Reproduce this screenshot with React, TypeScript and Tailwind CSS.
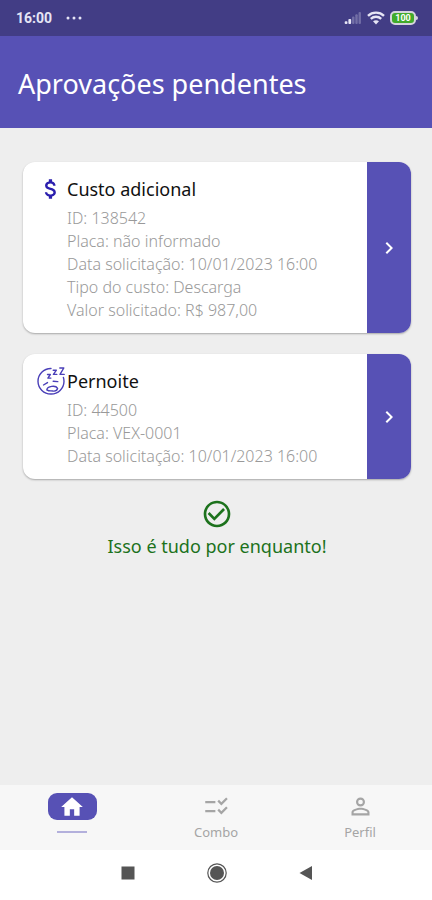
import type { ReactNode } from "react";
import {
  MdAttachMoney,
  MdCheckCircleOutline,
  MdChecklistRtl,
  MdChevronRight,
  MdHome,
  MdPersonOutline,
} from "react-icons/md";

type Approval = { title: string; icon: ReactNode; lines: string[] };

const approvals: Approval[] = [
  {
    title: "Custo adicional",
    icon: <MdAttachMoney className="size-[26px] text-[#2b1fae]" />,
    lines: [
      "ID: 138542",
      "Placa: não informado",
      "Data solicitação: 10/01/2023 16:00",
      "Tipo do custo: Descarga",
      "Valor solicitado: R$ 987,00",
    ],
  },
  {
    title: "Pernoite",
    icon: <SleepIcon />,
    lines: ["ID: 44500", "Placa: VEX-0001", "Data solicitação: 10/01/2023 16:00"],
  },
];

function SleepIcon() {
  return (
    <svg viewBox="0 0 28 28" className="size-7 shrink-0" fill="none" stroke="#4a3fb8" strokeWidth="1.4" strokeLinecap="round" strokeLinejoin="round" aria-hidden="true">
      <path d="M14 1.500A12.800 12.800 0 0 0 1 14.500A12.800 12.800 0 0 0 14 27A12.800 12.800 0 0 0 27 14.500A12.800 12.800 0 0 0 26.400 10.500" />
      <path d="M6.500 18l4-2.400M16.200 14.200l4.600.4" />
      <path d="M9.800 22.800c.6-3.600 8.800-5 10.800-1.400-.4 1.600-2 3-4.600 2.600-2.200-.4-3.800.4-6.200-1.200z" />
      <path d="M10.500 7.500h2.800l-2.400 3.600h3M16.200 3.200h3.200l-3 4.200h3.400M22.800 1h4l-3.800 6.400h4.200" />
    </svg>
  );
}

function StatusBar() {
  return (
    <div className="flex h-9 items-center justify-between bg-[#423d85] pr-[14px] pl-4 text-[#e6e5f5]">
      <div className="flex items-center gap-[14px]">
        <span className="font-[Roboto,sans-serif] text-sm font-bold">16:00</span>
        <svg viewBox="0 0 16 4" className="h-1 w-4" fill="currentColor" aria-hidden="true">
          <circle cx="2" cy="2" r="1.500" />
          <circle cx="8" cy="2" r="1.500" />
          <circle cx="14" cy="2" r="1.500" />
        </svg>
      </div>
      <div className="flex items-center gap-[5px]">
        <svg viewBox="0 0 18 13" className="h-3 w-[18px]" fill="currentColor" aria-hidden="true">
          <rect x="0" y="10" width="3" height="3" rx="1" />
          <rect x="4" y="7.500" width="3" height="5.500" rx="1" />
          <rect x="8" y="5" width="2.600" height="8" rx="1" opacity=".3" />
          <rect x="11.500" y="2.500" width="2.600" height="10.500" rx="1" opacity=".3" />
          <rect x="15" y="0" width="2.600" height="13" rx="1" opacity=".3" />
        </svg>
        <svg viewBox="0 0 18 14" className="h-[14px] w-[18px]" fill="none" stroke="currentColor" strokeWidth="2.400" aria-hidden="true">
          <path d="M1 4.800C5.500.6 12.500.6 17 4.800M3.800 7.800C6.800 5 11.200 5 14.200 7.800" />
          <path d="M6 10.300c1.800-1.500 4.200-1.500 6 0L9 13.500z" fill="currentColor" stroke="none" />
        </svg>
        <div className="flex items-center">
          <div className="flex h-[14px] w-[26px] items-center justify-center rounded-[5px] border-2 border-[#d5d4dd] bg-[#41ab2b] font-[Roboto,sans-serif] text-[9px] leading-none font-bold text-white">
            100
          </div>
          <div className="h-1 w-0.5 rounded-r-sm bg-[#d5d4dd]" />
        </div>
      </div>
    </div>
  );
}

function ApprovalCard({ title, icon, lines }: Approval) {
  return (
    <article className="flex overflow-hidden rounded-xl bg-white shadow-[0_1px_2px_rgba(0,0,0,0.3)]">
      <div className="flex-1 pt-3 pb-[11px] pl-[11px]">
        <div className="flex h-[30px] items-center">
          <div className="flex w-[33px] shrink-0 justify-center">{icon}</div>
          <h2 className="text-[18px] text-[#111]">{title}</h2>
        </div>
        <ul className="mt-[3px] pl-[33px] text-[16px] leading-[23px] font-light text-[#999]">
          {lines.map((line) => (
            <li key={line}>{line}</li>
          ))}
        </ul>
      </div>
      <button type="button" aria-label={title} className="flex w-11 shrink-0 items-center justify-center bg-[#5751b5] text-white">
        <MdChevronRight className="size-6" />
      </button>
    </article>
  );
}

function TabBar() {
  return (
    <nav className="grid h-[65px] grid-cols-3 bg-[#f7f7f7] text-[13px] text-[#a5a5a5]">
      <a href="#inicio" aria-label="Início" className="flex flex-col items-center pt-2">
        <span className="flex h-[27px] w-[49px] items-center justify-center rounded-[9px] bg-[#5751b5] text-white">
          <MdHome className="size-[26px]" />
        </span>
        <span className="mt-[11px] h-0.5 w-[30px] bg-[#b3b0dc]" />
      </a>
      <a href="#combo" className="flex flex-col items-center pt-2">
        <MdChecklistRtl className="size-[27px]" />
        <span className="leading-6">Combo</span>
      </a>
      <a href="#perfil" className="flex flex-col items-center pt-2">
        <MdPersonOutline className="size-[27px]" />
        <span className="leading-6">Perfil</span>
      </a>
    </nav>
  );
}

function SystemBar() {
  return (
    <div className="flex h-[50px] items-center justify-center gap-[69px] bg-white pb-1 pl-0.5 text-[#555]">
      <button type="button" aria-label="Recentes">
        <svg viewBox="0 0 20 20" className="size-5" fill="currentColor" aria-hidden="true">
          <rect x="3.500" y="3.500" width="13" height="13" />
        </svg>
      </button>
      <button type="button" aria-label="Tela inicial">
        <svg viewBox="0 0 20 20" className="size-5" fill="currentColor" aria-hidden="true">
          <circle cx="10" cy="10" r="9.200" fill="none" stroke="currentColor" strokeWidth="1.200" />
          <circle cx="10" cy="10" r="7" />
        </svg>
      </button>
      <button type="button" aria-label="Voltar">
        <svg viewBox="0 0 20 20" className="size-5" fill="currentColor" aria-hidden="true">
          <path d="M3.500 10L16 3v14z" />
        </svg>
      </button>
    </div>
  );
}

export default function App() {
  return (
    <div className="flex min-h-screen flex-col bg-[#eee] font-['Noto_Sans',sans-serif]">
      <StatusBar />
      <header className="flex h-[92px] items-center bg-[#5751b5] px-[18px] pt-1">
        <h1 className="text-[27px] text-white">Aprovações pendentes</h1>
      </header>
      <main className="flex flex-1 flex-col gap-[21px] pt-[34px] pr-[21px] pl-[23px]">
        {approvals.map((approval) => (
          <ApprovalCard key={approval.title} {...approval} />
        ))}
        <div className="-mt-0.5 flex flex-col items-center text-[#1c721c]">
          <MdCheckCircleOutline className="size-8" />
          <p className="mt-1 text-[18px] leading-6">Isso é tudo por enquanto!</p>
        </div>
      </main>
      <TabBar />
      <SystemBar />
    </div>
  );
}
